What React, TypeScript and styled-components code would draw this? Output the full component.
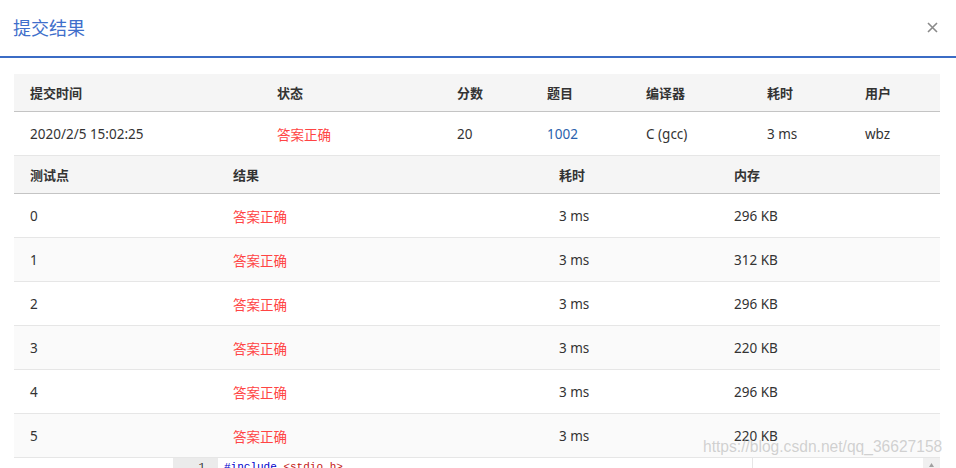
import React from 'react';
import styled, { createGlobalStyle } from 'styled-components';

const GlobalStyle = createGlobalStyle`
  body {
    margin: 0;
    background: #fff;
    font-family: "Noto Sans", "Noto Sans CJK SC", sans-serif;
    color: #333;
  }
`;

const Modal = styled.div`
  width: 956px;
  height: 468px;
  overflow: hidden;
  position: relative;
  background: #fff;
`;

const Header = styled.div`
  height: 56px;
  padding: 0 17px 0 13px;
  display: flex;
  align-items: center;
  justify-content: space-between;
  border-bottom: 2px solid #3b6cc5;
`;

const Title = styled.h3`
  margin: 0;
  font-size: 18px;
  font-weight: 400;
  color: #3f6fcb;
  line-height: 1;
`;

const CloseButton = styled.button`
  border: none;
  background: transparent;
  padding: 0;
  width: 14px;
  height: 14px;
  display: flex;
  align-items: center;
  justify-content: center;
  cursor: pointer;
  margin-top: -2px;
`;

const Body = styled.div`
  padding: 16px 16px 0 14px;
`;

const Table = styled.table`
  width: 100%;
  border-collapse: collapse;
  table-layout: fixed;
  font-size: 13.5px;
`;

const HeadCell = styled.th`
  height: 37px;
  padding: 0 16px;
  text-align: left;
  font-size: 13px;
  font-weight: 600;
  color: #333;
  background: #f5f5f5;
  border-bottom: 1px solid #c4c4c4;
  white-space: nowrap;
`;

const Row = styled.tr<{ $striped?: boolean }>`
  background: ${({ $striped }) => ($striped ? '#fafafa' : '#fff')};
`;

const Cell = styled.td<{ $tone?: 'ok' | 'link' }>`
  height: 43px;
  padding: 0 16px;
  border-bottom: 1px solid #e6e6e6;
  white-space: nowrap;
  color: ${({ $tone }) => ($tone === 'ok' ? '#ff4444' : $tone === 'link' ? '#2a62ad' : '#333')};
`;

const Editor = styled.div`
  display: flex;
  margin-left: 159px;
  height: 24px;
  font-family: "Liberation Mono", "DejaVu Sans Mono", monospace;
  font-size: 11px;
  line-height: 16px;
`;

const Gutter = styled.div`
  width: 45px;
  background: #ebebeb;
  color: #333;
  text-align: right;
  padding: 1px 13px 0 0;
  box-sizing: border-box;
`;

const CodeArea = styled.div`
  flex: 1;
  position: relative;
  padding: 1px 0 0 6px;
`;

const PrintMargin = styled.div`
  position: absolute;
  left: 534px;
  top: 0;
  bottom: 0;
  width: 1px;
  background: #e6e6e6;
`;

const Keyword = styled.span`
  color: #0000cc;
`;

const Include = styled.span`
  color: #c41a16;
`;

const Scrollbar = styled.div`
  width: 17px;
  background: #f0f0f0;
  display: flex;
  justify-content: center;
  padding-top: 5px;
  box-sizing: border-box;
`;

const Watermark = styled.div`
  position: absolute;
  left: 703px;
  top: 438px;
  font-family: "Liberation Sans", Arial, sans-serif;
  font-size: 15.6px;
  color: rgba(190, 190, 190, 0.7);
  pointer-events: none;
`;

const submission = {
  time: '2020/2/5 15:02:25',
  status: '答案正确',
  score: '20',
  problem: '1002',
  compiler: 'C (gcc)',
  cost: '3 ms',
  user: 'wbz',
};

const cases = [
  { id: 0, mem: '296 KB' },
  { id: 1, mem: '312 KB' },
  { id: 2, mem: '296 KB' },
  { id: 3, mem: '220 KB' },
  { id: 4, mem: '296 KB' },
  { id: 5, mem: '220 KB' },
];

export default function App() {
  return (
    <>
      <GlobalStyle />
      <Modal>
        <Header>
          <Title>提交结果</Title>
          <CloseButton aria-label="关闭">
            <svg width="11" height="11" viewBox="0 0 11 11">
              <path d="M1 1L10 10M10 1L1 10" stroke="#8a8a8a" strokeWidth="1.6" />
            </svg>
          </CloseButton>
        </Header>
        <Body>
          <Table>
            <colgroup>
              <col style={{ width: 247 }} />
              <col style={{ width: 180 }} />
              <col style={{ width: 90 }} />
              <col style={{ width: 99 }} />
              <col style={{ width: 121 }} />
              <col style={{ width: 98 }} />
              <col style={{ width: 91 }} />
            </colgroup>
            <thead>
              <tr>
                <HeadCell>提交时间</HeadCell>
                <HeadCell>状态</HeadCell>
                <HeadCell>分数</HeadCell>
                <HeadCell>题目</HeadCell>
                <HeadCell>编译器</HeadCell>
                <HeadCell>耗时</HeadCell>
                <HeadCell>用户</HeadCell>
              </tr>
            </thead>
            <tbody>
              <Row>
                <Cell>{submission.time}</Cell>
                <Cell $tone="ok">{submission.status}</Cell>
                <Cell>{submission.score}</Cell>
                <Cell $tone="link">{submission.problem}</Cell>
                <Cell>{submission.compiler}</Cell>
                <Cell>{submission.cost}</Cell>
                <Cell>{submission.user}</Cell>
              </Row>
            </tbody>
          </Table>
          <Table>
            <colgroup>
              <col style={{ width: 203 }} />
              <col style={{ width: 326 }} />
              <col style={{ width: 175 }} />
              <col style={{ width: 222 }} />
            </colgroup>
            <thead>
              <tr>
                <HeadCell>测试点</HeadCell>
                <HeadCell>结果</HeadCell>
                <HeadCell>耗时</HeadCell>
                <HeadCell>内存</HeadCell>
              </tr>
            </thead>
            <tbody>
              {cases.map((c) => (
                <Row key={c.id} $striped={c.id % 2 === 1}>
                  <Cell>{c.id}</Cell>
                  <Cell $tone="ok">答案正确</Cell>
                  <Cell>3 ms</Cell>
                  <Cell>{c.mem}</Cell>
                </Row>
              ))}
            </tbody>
          </Table>
          <Editor>
            <Gutter>1</Gutter>
            <CodeArea>
              <PrintMargin />
              <Keyword>#include</Keyword> <Include>&lt;stdio.h&gt;</Include>
            </CodeArea>
            <Scrollbar>
              <svg width="5" height="4" viewBox="0 0 5 4">
                <path d="M0 4L2.5 0L5 4Z" fill="#a0a0a0" />
              </svg>
            </Scrollbar>
          </Editor>
        </Body>
        <Watermark>https://blog.csdn.net/qq_36627158</Watermark>
      </Modal>
    </>
  );
}
